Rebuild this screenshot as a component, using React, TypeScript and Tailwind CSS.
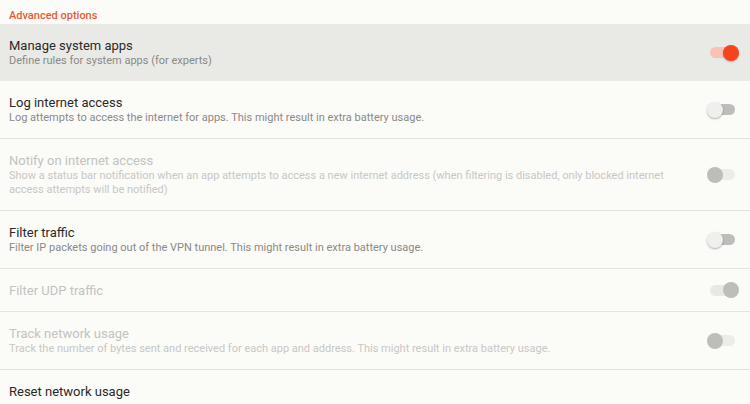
import React from "react";

type Row = {
  title: string;
  summary?: string;
  disabled?: boolean;
  toggle?: "on" | "off" | null;
  highlight?: boolean;
};

const rows: Row[] = [
  { title: "Manage system apps", summary: "Define rules for system apps (for experts)", toggle: "on", highlight: true },
  { title: "Log internet access", summary: "Log attempts to access the internet for apps. This might result in extra battery usage.", toggle: "off" },
  {
    title: "Notify on internet access",
    summary:
      "Show a status bar notification when an app attempts to access a new internet address (when filtering is disabled, only blocked internet access attempts will be notified)",
    toggle: "off",
    disabled: true,
  },
  { title: "Filter traffic", summary: "Filter IP packets going out of the VPN tunnel. This might result in extra battery usage.", toggle: "off" },
  { title: "Filter UDP traffic", toggle: "on", disabled: true },
  {
    title: "Track network usage",
    summary: "Track the number of bytes sent and received for each app and address. This might result in extra battery usage.",
    toggle: "off",
    disabled: true,
  },
  { title: "Reset network usage", toggle: null },
];

function Toggle({ on, disabled }: { on: boolean; disabled?: boolean }) {
  const track = on
    ? disabled
      ? "bg-[#e8e8e4]"
      : "bg-[#f6c3b6]"
    : disabled
    ? "bg-[#ecece8]"
    : "bg-[#bdbdbb]";
  const thumb = on
    ? disabled
      ? "bg-[#bdbdba] left-[16px]"
      : "bg-[#f4441c] left-[16px] shadow-[0_1px_2px_rgba(0,0,0,0.25)]"
    : disabled
    ? "bg-[#bdbdba] left-0"
    : "bg-[#efefed] left-0 shadow-[0_1px_2px_rgba(0,0,0,0.3)]";
  return (
    <div className="relative w-[32px] h-[16px] mr-[11px] shrink-0">
      <div className={`absolute left-[3px] right-[4px] top-[2.5px] h-[11px] rounded-full ${track}`} />
      <div className={`absolute top-0 w-[16px] h-[16px] rounded-full ${thumb}`} />
    </div>
  );
}

export default function App() {
  return (
    <div
      className="w-[750px] h-[404px] overflow-hidden bg-[#fbfbf8]"
      style={{ fontFamily: "Roboto, 'Noto Sans', sans-serif" }}
    >
      <div className="h-[24px] pl-[9px] pt-[9px] text-[11px] leading-[14px] font-medium text-[#e85a35]">
        Advanced options
      </div>
      {rows.map((r, i) => (
        <div
          key={i}
          className={`flex items-center justify-between pl-[9px] ${r.summary ? "py-[13px]" : "py-[12.5px]"} ${
            r.highlight ? "bg-[#e9e9e6]" : "border-b border-[#e4e4e0]"
          }`}
        >
          <div className="flex flex-col pr-[40px]">
            <div className={`text-[13px] leading-[17px] ${r.disabled ? "text-[#c3c3c0]" : "text-[#2a2a2a]"}`}>
              {r.title}
            </div>
            {r.summary && (
              <div className={`text-[11px] leading-[14px] ${r.disabled ? "text-[#c8c8c5]" : "text-[#8a8a88]"}`}>
                {r.summary}
              </div>
            )}
          </div>
          {r.toggle && <Toggle on={r.toggle === "on"} disabled={r.disabled} />}
        </div>
      ))}
    </div>
  );
}
